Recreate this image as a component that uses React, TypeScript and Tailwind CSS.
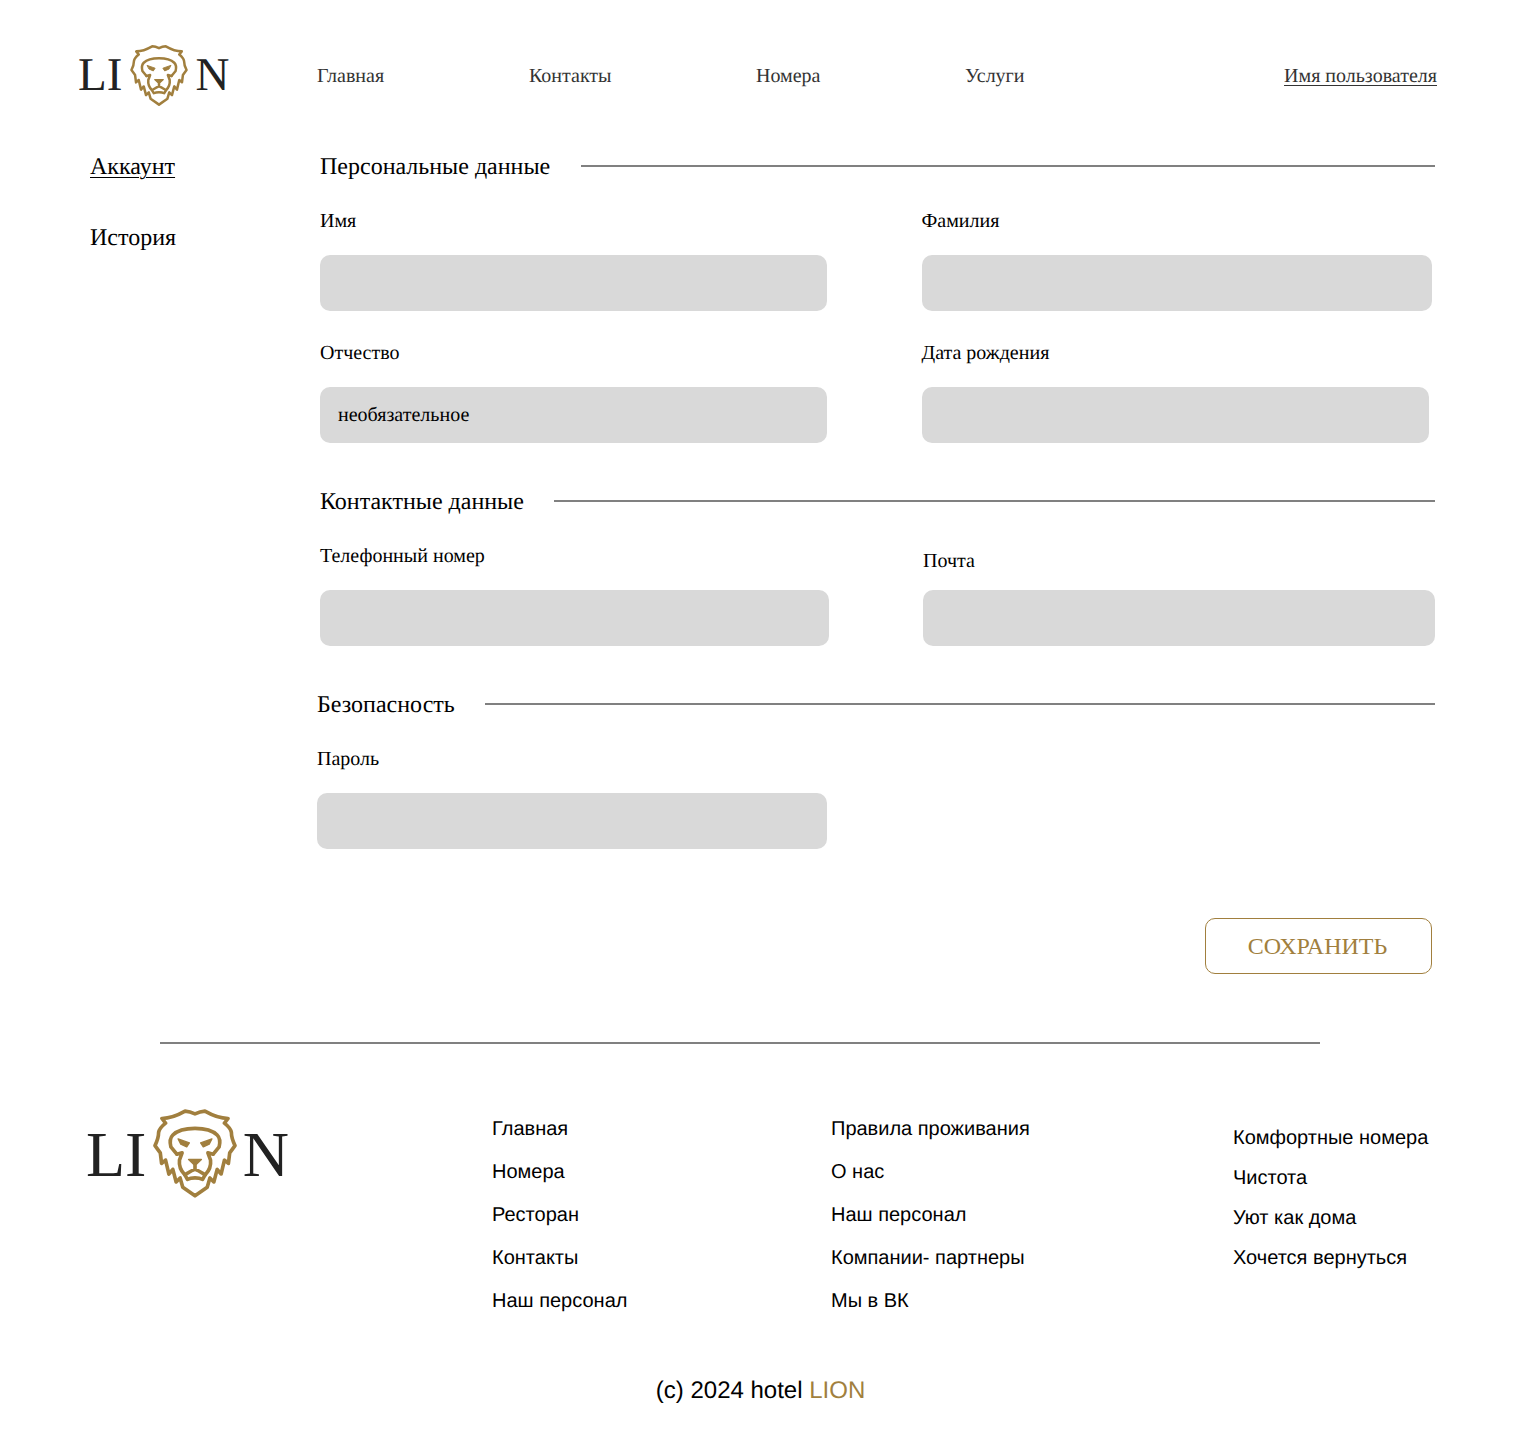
const serif = "font-['Liberation_Serif',serif]";
const sans = "font-['Liberation_Sans',Arial,sans-serif]";

function Lion({ className }: { className: string }) {
  return (
    <svg viewBox="8 14 254 268" className={className} fill="none" stroke="#a17f3e" strokeWidth="11" strokeLinejoin="round" strokeLinecap="round">
      <path d="M135 276L98 250L90 222L78 234L68 196L56 210L46 168L34 178L30 146L14 124C22 108 25 96 25 84C27 72 36 64 46 56L35 42C62 42 84 32 105 20C118 21 126 24 135 28C144 24 152 21 165 20C186 32 208 42 235 42L224 56C234 64 243 72 245 84C245 96 248 108 256 124L240 146L236 178L224 168L214 210L202 196L192 234L180 222L172 250Z" />
      <path d="M80 150L62 128C58 112 60 100 68 92C82 78 108 72 135 72C162 72 188 78 202 92C210 100 212 112 208 128L190 150" />
      <path d="M80 150L96 146L88 168C86 186 92 200 104 212M190 150L174 146L182 168C184 186 178 200 166 212" />
      <path d="M84 104L118 116L110 128L92 120ZM186 104L152 116L160 128L178 120Z" fill="#a17f3e" strokeWidth="4" />
      <path d="M116 166H154L135 184Z" fill="#a17f3e" strokeWidth="5" />
      <path d="M135 184V196M104 212C114 208 118 202 135 196C152 202 156 208 166 212L158 226C146 220 124 220 112 226Z" />
    </svg>
  );
}

function Logo({ big }: { big?: boolean }) {
  return big ? (
    <div className={`flex items-center ${serif} text-[64px] leading-[64px] text-[#222222] ml-[86px] w-[203px] h-[89px] shrink-0 justify-between`}>
      <span className="pt-[2px]">LI</span>
      <Lion className="w-[84px] h-[89px] shrink-0" />
      <span className="pt-[2px]">N</span>
    </div>
  ) : (
    <div className={`flex items-center ${serif} text-[47px] leading-[48px] text-[#222222] -ml-[1px] w-[151.5px] h-[61px] justify-between shrink-0`}>
      <span>LI</span>
      <Lion className="w-[58px] h-[61px] shrink-0" />
      <span>N</span>
    </div>
  );
}

function Heading({ children, gap }: { children: string; gap: string }) {
  return (
    <div className="flex items-start h-[28px]">
      <h2 className="text-[24px] leading-[28px] mt-[1px] text-black whitespace-nowrap">{children}</h2>
      <div className={`flex-1 h-[2px] mt-[13px] bg-[#808080] ${gap}`} />
    </div>
  );
}

function Field({ label, width, value, labelMb = "mb-[23px]" }: { label: string; width: string; value?: string; labelMb?: string }) {
  return (
    <div className={width}>
      <div className={`text-[20px] leading-[22px] text-black ${labelMb}`}>{label}</div>
      <div className="h-[56px] rounded-[10px] bg-[#d9d9d9] flex items-center pl-[18px] text-[20px] text-black">{value}</div>
    </div>
  );
}

function FooterCol({ items, className }: { items: string[]; className: string }) {
  return (
    <ul className={className}>
      {items.map((t) => (
        <li key={t} className="whitespace-nowrap">{t}</li>
      ))}
    </ul>
  );
}

export default function App() {
  return (
    <div className={`w-[1520px] h-[1448px] bg-white overflow-hidden [text-rendering:geometricPrecision] ${serif}`}>
      <header className="flex items-center pt-[44px] pl-[79px] pr-[83px] h-[106px]">
        <Logo />
        <nav className="flex-1 flex items-center text-[20px] leading-[24px] text-[#333333] ml-[87.5px] mt-[1px]">
          <a className="w-[212px]">Главная</a>
          <a className="w-[227px]">Контакты</a>
          <a className="w-[209px]">Номера</a>
          <a>Услуги</a>
          <a className="ml-auto underline decoration-1 underline-offset-[3px]">Имя пользователя</a>
        </nav>
      </header>

      <div className="flex mt-[46px]">
        <aside className="w-[317px] shrink-0 pl-[90px] pt-[1px] text-[24px] leading-[28px] text-black">
          <div className="underline decoration-1 underline-offset-[3px]">Аккаунт</div>
          <div className="mt-[43px]">История</div>
        </aside>

        <main className="w-[1118px]">
          <section className="pl-[3px]">
            <Heading gap="ml-[31px]">Персональные данные</Heading>
            <div className="flex gap-[94.5px] mt-[30px]">
              <Field label="Имя" width="w-[507px]" />
              <Field label="Фамилия" width="w-[510.5px]" />
            </div>
            <div className="flex gap-[94.5px] mt-[31px]">
              <Field label="Отчество" width="w-[507px]" value="необязательное" />
              <Field label="Дата рождения" width="w-[507.5px]" />
            </div>
          </section>

          <section className="pl-[3px] mt-[44px]">
            <Heading gap="ml-[30px]">Контактные данные</Heading>
            <div className="flex gap-[94px] mt-[30px] items-end">
              <Field label="Телефонный номер" width="w-[509px]" />
              <Field label="Почта" width="w-[512px]" labelMb="mb-[18px]" />
            </div>
          </section>

          <section className="mt-[44px]">
            <Heading gap="ml-[30px]">Безопасность</Heading>
            <div className="mt-[30px]">
              <Field label="Пароль" width="w-[510px]" />
            </div>
          </section>

          <div className="flex justify-end pr-[3px] mt-[69px]">
            <button className="w-[227px] h-[56px] pr-[2px] rounded-[10px] border border-[#a17f3e] text-[24px] text-[#a17f3e]">СОХРАНИТЬ</button>
          </div>
        </main>
      </div>

      <div className="w-[1160px] h-[2px] bg-[#808080] ml-[160px] mt-[68px]" />

      <footer className={`${sans} text-[20px] leading-[23px] text-black`}>
        <div className="flex items-start mt-[65px]">
          <Logo big />
          <FooterCol items={["Главная", "Номера", "Ресторан", "Контакты", "Наш персонал"]} className="ml-[203px] w-[339px] mt-[9px] flex flex-col gap-[20px]" />
          <FooterCol items={["Правила проживания", "О нас", "Наш персонал", "Компании- партнеры", "Мы в ВК"]} className="w-[402px] mt-[9px] flex flex-col gap-[20px]" />
          <FooterCol items={["Комфортные номера", "Чистота", "Уют как дома", "Хочется вернуться"]} className="mt-[18px] flex flex-col gap-[17px]" />
        </div>
        <div className="text-center text-[24px] leading-[28px] mt-[64px] pl-[1px]">
          (c) 2024 hotel <span className="text-[#a17f3e]">LION</span>
        </div>
      </footer>
    </div>
  );
}
